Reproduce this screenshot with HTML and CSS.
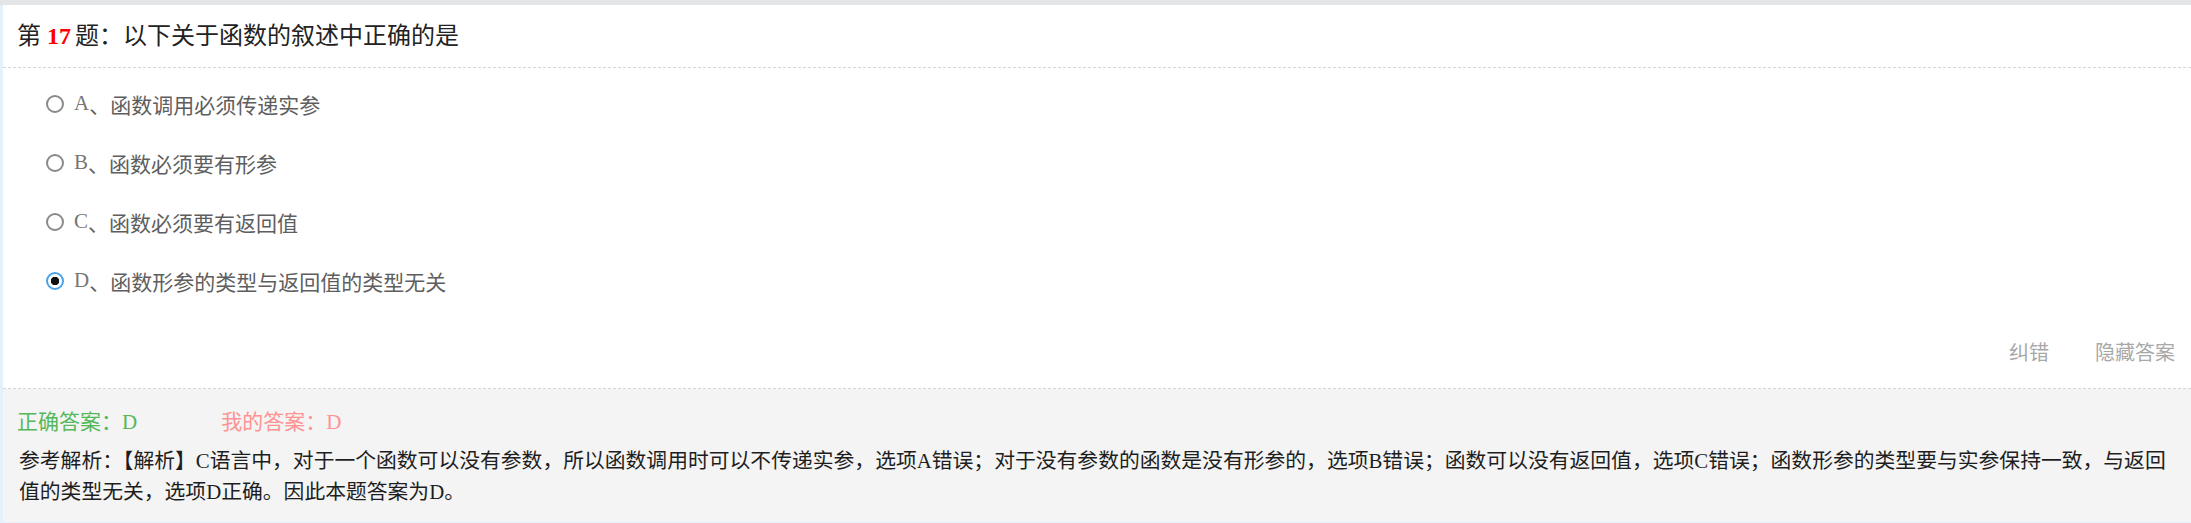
FILE: index.html
```html
<!DOCTYPE html>
<html lang="zh-CN">
<head>
    <meta charset="UTF-8">
    <meta name="viewport" content="width=device-width, initial-scale=1.0">
    <title>第17题</title>
    <link rel="stylesheet" href="styles.css">
</head>
<body>
    <div class="topbar"></div>
    <div class="page">
        <div class="question">
            <div class="q-title">第 <b class="q-num">17</b>题：以下关于函数的叙述中正确的是</div>
            <ul class="options">
                <li><span class="radio"></span><span class="opt-letter">A</span>、函数调用必须传递实参</li>
                <li><span class="radio"></span><span class="opt-letter">B</span>、函数必须要有形参</li>
                <li><span class="radio"></span><span class="opt-letter">C</span>、函数必须要有返回值</li>
                <li><span class="radio checked"></span><span class="opt-letter">D</span>、函数形参的类型与返回值的类型无关</li>
            </ul>
            <div class="tools">
                <a href="#">纠错</a>
                <a href="#">隐藏答案</a>
            </div>
        </div>
        <div class="answer">
            <div class="answer-row">
                <span class="right-answer">正确答案：D</span>
                <span class="my-answer">我的答案：D</span>
            </div>
            <p class="analysis">参考解析：【解析】C语言中，对于一个函数可以没有参数，所以函数调用时可以不传递实参，选项A错误；对于没有参数的函数是没有形参的，选项B错误；函数可以没有返回值，选项C错误；函数形参的类型要与实参保持一致，与返回值的类型无关，选项D正确。因此本题答案为D。</p>
        </div>
    </div>
</body>
</html>
```

FILE: styles.css
```css
html,body{
    margin: 0;
    padding: 0;
    overflow: hidden;
}
body{
    background-color: #e4f1fc;
    font-family: "Liberation Serif", "Noto Sans CJK SC", serif;
    color: #333;
}
.topbar{
    height: 5px;
    background-color: #e4e5e7;
}
.page{
    margin-left: 3px;
    background-color: #fff;
}
.question{
    border-bottom: 1px dashed #d6d6d6;
}
.q-title{
    height: 62px;
    line-height: 62px;
    padding-left: 14px;
    font-size: 24px;
    color: #222;
    border-bottom: 1px dashed #d6d6d6;
}
.q-num{
    color: #f00;
    margin-right: 4px;
}
.options{
    list-style: none;
    margin: 0;
    padding: 6px 0 0 43px;
}
.options li{
    display: flex;
    align-items: center;
    height: 59px;
    font-size: 21px;
    color: #5e5e5e;
}
.radio{
    box-sizing: border-box;
    width: 18px;
    height: 18px;
    margin-right: 10px;
    border: 2px solid #8a8a8a;
    border-radius: 50%;
    background-color: #fff;
}
.radio.checked{
    border: 2px solid #4aa3ea;
    background: radial-gradient(circle, #111 0 4px, #fff 4.5px);
}
.opt-letter{
    color: #777;
}
.tools{
    display: flex;
    justify-content: flex-end;
    gap: 46px;
    padding: 28px 16px 20px 0;
    line-height: 30px;
    font-size: 20px;
}
.tools a{
    color: #a8a8a8;
    text-decoration: none;
}
.answer{
    background-color: #f4f4f4;
    padding: 18px 8px 15px 14px;
}
.answer-row{
    display: flex;
    gap: 84px;
    line-height: 30px;
    font-size: 21px;
}
.right-answer{
    color: #55b95a;
}
.my-answer{
    color: #ff9393;
}
.analysis{
    margin: 8px 0 0 2px;
    font-size: 20.8px;
    line-height: 31px;
    color: #1e1e1e;
}
```
